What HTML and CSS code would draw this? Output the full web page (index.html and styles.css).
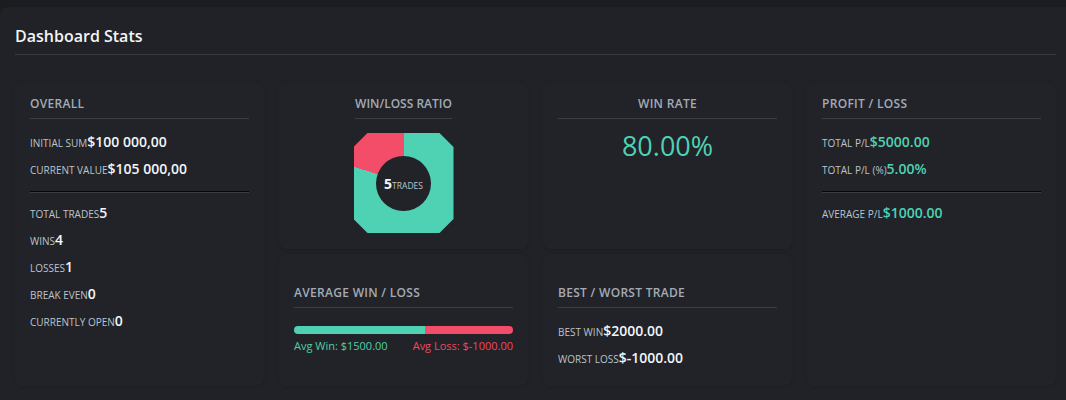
FILE: index.html
```html
<!DOCTYPE html>
<html lang="en">

<head>
    <meta charset="UTF-8">
    <meta name="viewport" content="width=device-width, initial-scale=1.0">
    <title>Dashboard Stats</title>
    <link rel="stylesheet" href="styles.css">
</head>

<body>
    <div class="panel">
        <h1 class="title">Dashboard Stats</h1>

        <div class="grid">
            <!-- Overall -->
            <div class="card tall">
                <h3 class="card-head">Overall</h3>
                <div class="row"><span class="lbl">Initial Sum</span><span class="val">$100 000,00</span></div>
                <div class="row"><span class="lbl">Current Value</span><span class="val">$105 000,00</span></div>
                <div class="sep"></div>
                <div class="row"><span class="lbl">Total Trades</span><span class="val">5</span></div>
                <div class="row"><span class="lbl">Wins</span><span class="val">4</span></div>
                <div class="row"><span class="lbl">Losses</span><span class="val">1</span></div>
                <div class="row"><span class="lbl">Break Even</span><span class="val">0</span></div>
                <div class="row"><span class="lbl">Currently Open</span><span class="val">0</span></div>
            </div>

            <!-- Win/Loss ratio -->
            <div class="card">
                <h3 class="card-head fit">Win/Loss Ratio</h3>
                <div class="donut">
                    <div class="donut-hole"><span class="donut-num">5</span><span class="donut-lbl">Trades</span></div>
                </div>
            </div>

            <!-- Win rate -->
            <div class="card">
                <h3 class="card-head center">Win Rate</h3>
                <div class="big-rate">80.00%</div>
            </div>

            <!-- Profit / loss -->
            <div class="card tall">
                <h3 class="card-head">Profit / Loss</h3>
                <div class="row"><span class="lbl">Total P/L</span><span class="val pos">$5000.00</span></div>
                <div class="row"><span class="lbl">Total P/L (%)</span><span class="val pos">5.00%</span></div>
                <div class="sep"></div>
                <div class="row"><span class="lbl">Average P/L</span><span class="val pos">$1000.00</span></div>
            </div>

            <!-- Average win / loss -->
            <div class="card low">
                <h3 class="card-head">Average Win / Loss</h3>
                <div class="bar">
                    <div class="bar-win" style="width: 60%"></div>
                    <div class="bar-loss"></div>
                </div>
                <div class="bar-labels">
                    <span class="pos-txt">Avg Win: $1500.00</span>
                    <span class="neg-txt">Avg Loss: $-1000.00</span>
                </div>
            </div>

            <!-- Best / worst -->
            <div class="card low">
                <h3 class="card-head">Best / Worst Trade</h3>
                <div class="row"><span class="lbl">Best Win</span><span class="val">$2000.00</span></div>
                <div class="row"><span class="lbl">Worst Loss</span><span class="val">$-1000.00</span></div>
            </div>
        </div>
    </div>
</body>
</html>
```

FILE: styles.css
```css
body {
    margin: 0;
    padding-top: 7px;
    background-color: #1a1c1f;
    font-family: "Open Sans", "Noto Sans", sans-serif;
    color: #f2f4f7;
    height: 393px;
    overflow: hidden;
}

.panel {
    background-color: #202227;
    border-radius: 8px 0 0 0;
    padding: 0 10px 0 15px;
    height: 393px;
}

.title {
    margin: 0;
    padding: 17px 0 6px;
    font-size: 16px;
    line-height: 24px;
    font-weight: 600;
    color: #f3f4f6;
    border-bottom: 1px solid #3a3c42;
}

.grid {
    display: grid;
    grid-template-columns: repeat(4, 1fr);
    grid-template-rows: 166px 132px;
    gap: 5px 15px;
    margin-top: 28px;
}

.card {
    background-color: #212328;
    border-radius: 8px;
    box-shadow: 0 1px 4px rgba(0, 0, 0, 0.12);
    padding: 12px 15px;
}

.card.tall {
    grid-row: span 2;
}

.card.low {
    padding-top: 30px;
}

.card-head {
    margin: 0 0 9px;
    padding-bottom: 5px;
    font-size: 12px;
    line-height: 18px;
    font-weight: 600;
    letter-spacing: 0.3px;
    text-transform: uppercase;
    color: #a3abb6;
    border-bottom: 1px solid #3b3e45;
    white-space: nowrap;
}

.card-head.fit {
    display: table;
    margin: 0 auto;
    letter-spacing: 0;
}

.card-head.center {
    text-align: center;
}

.row {
    line-height: 27px;
    height: 27px;
}

.lbl {
    font-size: 10px;
    text-transform: uppercase;
    color: #bcc3cc;
}

.val {
    font-size: 14px;
    font-weight: 600;
    color: #f3f5f8;
}

.val.pos {
    color: #4fd1b4;
}

.sep {
    margin: 9px 0 6px;
    border-top: 1px solid #050607;
    border-bottom: 1px solid #3a3d44;
}

/* donut */
.donut {
    width: 100px;
    height: 100px;
    margin: 14px auto 0;
    background: conic-gradient(#4fd1b4 0 288deg, #f44d69 288deg 360deg);
    clip-path: polygon(14px 0, 86px 0, 100% 14px, 100% 86px, 86px 100%, 14px 100%, 0 86px, 0 14px);
    display: flex;
    align-items: center;
    justify-content: center;
}

.donut-hole {
    width: 55px;
    height: 55px;
    border-radius: 50%;
    background-color: #212328;
    display: flex;
    align-items: baseline;
    justify-content: center;
    line-height: 55px;
}

.donut-num {
    font-size: 14px;
    font-weight: 700;
    color: #f3f5f8;
}

.donut-lbl {
    font-size: 8.5px;
    text-transform: uppercase;
    color: #bcc3cc;
}

.big-rate {
    margin-top: 4px;
    text-align: center;
    font-size: 27px;
    line-height: 36px;
    color: #4fd1b4;
}

/* average bar */
.bar {
    display: flex;
    height: 8px;
    margin-top: 18px;
    border-radius: 4px;
    overflow: hidden;
}

.bar-win {
    background-color: #4fd1b4;
}

.bar-loss {
    flex: 1;
    background-color: #f44d69;
}

.bar-labels {
    display: flex;
    justify-content: space-between;
    margin-top: 4px;
    font-size: 11px;
    line-height: 16px;
}

.pos-txt {
    color: #4fd1a4;
}

.neg-txt {
    color: #f2475f;
}
```
